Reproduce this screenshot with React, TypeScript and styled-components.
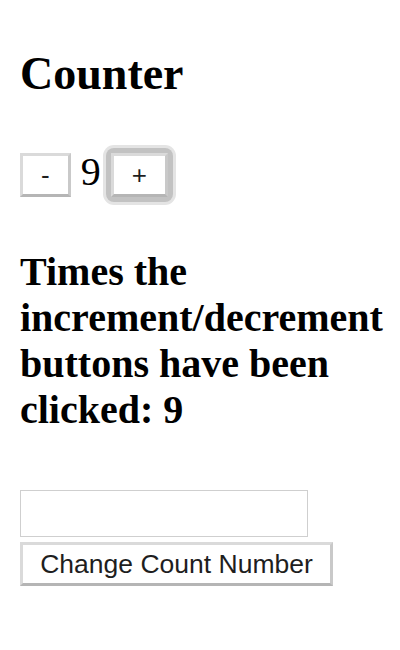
import { useState } from "react";
import styled, { createGlobalStyle } from "styled-components";

const GlobalStyle = createGlobalStyle`
  html, body {
    margin: 0;
    padding: 0;
    background: #ffffff;
  }

  body {
    font-family: "Liberation Serif", "Times New Roman", serif;
    color: #000000;
  }
`;

const Page = styled.div`
  padding: 0 20px;
  display: flex;
  flex-direction: column;
  align-items: flex-start;
`;

const Title = styled.h1`
  font-size: 46px;
  font-weight: 700;
  margin: 48px 0 0;
  line-height: 1.15;
`;

const CounterRow = styled.div`
  margin-top: 52px;
  display: flex;
  align-items: center;
  gap: 10px;
`;

const Count = styled.span`
  font-size: 40px;
  line-height: 1;
  margin-top: -6px;
`;

const StepButton = styled.button`
  font-family: "Liberation Sans", Arial, sans-serif;
  font-size: 26px;
  line-height: 30px;
  color: #1e1e1e;
  background: #ffffff;
  padding: 4px 18px;
  border: 3px solid;
  border-color: #dadada #c9c9c9 #b5b5b5 #dadada;
  cursor: pointer;
`;

// focus ring drawn around the "+" button, takes no layout space
const FocusRing = styled.span`
  display: inline-flex;
  padding: 5px;
  margin: -5px;
  border-radius: 8px;
  background: #c2c2c2;
  box-shadow: 0 0 0 3px #e4e4e4;
`;

const Summary = styled.h2`
  font-size: 40px;
  font-weight: 700;
  line-height: 46px;
  margin: 52px 0 0;
`;

const Form = styled.form`
  margin-top: 57px;
  display: flex;
  flex-direction: column;
  align-items: flex-start;
  gap: 5px;
`;

const NumberInput = styled.input`
  width: 288px;
  height: 47px;
  box-sizing: border-box;
  border: 1px solid #cfcfcf;
  padding: 0 8px;
  font-family: "Liberation Sans", Arial, sans-serif;
  font-size: 24px;
  outline: none;
`;

const SubmitButton = styled(StepButton)`
  width: 313px;
  height: 44px;
  padding: 0 10px;
  font-size: 26.5px;
  line-height: 1;
`;

export default function App() {
  const [count, setCount] = useState(9);
  const [clicks, setClicks] = useState(9);
  const [value, setValue] = useState("");

  const step = (d: number) => {
    setCount((c) => c + d);
    setClicks((c) => c + 1);
  };

  return (
    <>
      <GlobalStyle />
      <Page>
        <Title>Counter</Title>
        <CounterRow>
          <StepButton onClick={() => step(-1)}>-</StepButton>
          <Count>{count}</Count>
          <FocusRing>
            <StepButton onClick={() => step(1)}>+</StepButton>
          </FocusRing>
        </CounterRow>
        <Summary>
          Times the increment/decrement buttons have been clicked: {clicks}
        </Summary>
        <Form
          onSubmit={(e) => {
            e.preventDefault();
            const n = Number(value);
            if (!Number.isNaN(n) && value !== "") setCount(n);
          }}
        >
          <NumberInput
            type="text"
            value={value}
            onChange={(e) => setValue(e.target.value)}
          />
          <SubmitButton type="submit">Change Count Number</SubmitButton>
        </Form>
      </Page>
    </>
  );
}
